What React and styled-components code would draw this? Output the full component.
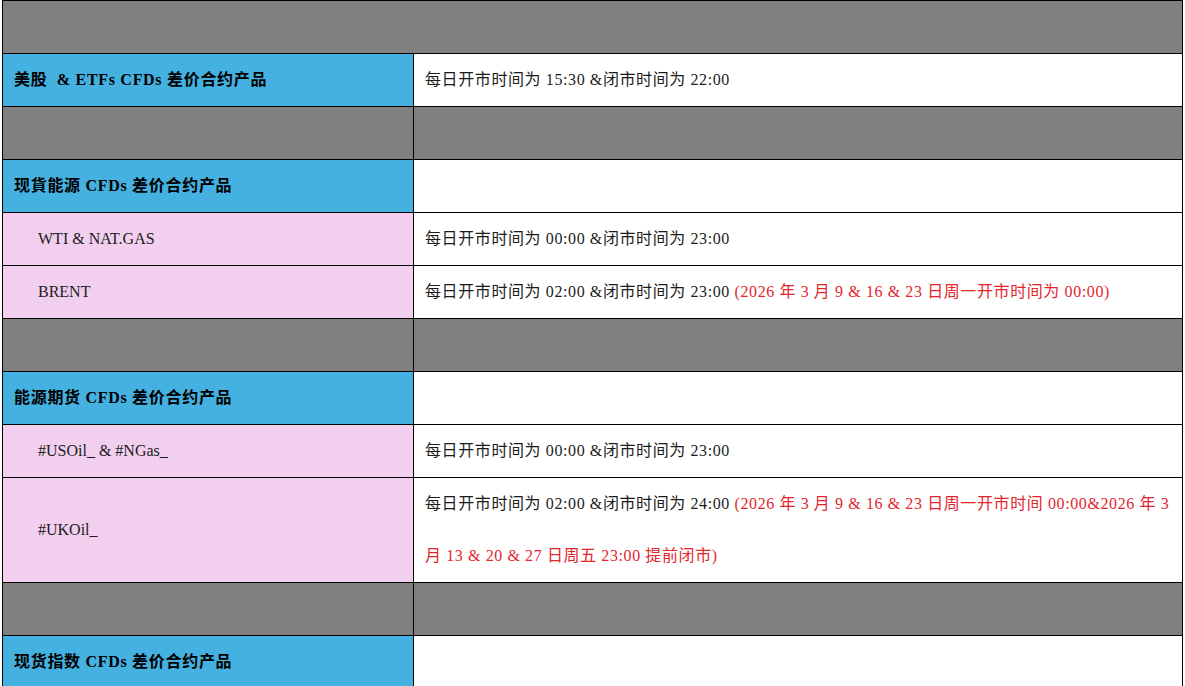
import React from "react"
import styled, { createGlobalStyle } from "styled-components"

const GlobalStyle = createGlobalStyle`
  html, body {
    margin: 0;
    padding: 0;
    background: #ffffff;
  }
  body {
    font-family: "Liberation Serif", "Noto Sans CJK SC", serif;
  }
`

const Page = styled.div`
  padding: 0 2px;
`

const Table = styled.table`
  width: 100%;
  border-collapse: collapse;
  table-layout: fixed;
  font-size: 16px;
  color: #1c1c1c;
`

const fills = {
  gray: "#808080",
  blue: "#45b1e0",
  pink: "#f2cfef",
  white: "#ffffff",
}

const Cell = styled.td`
  border: 1px solid #000;
  background: ${({ $fill }) => fills[$fill] || fills.white};
  line-height: 52px;
  height: 52px;
  padding: 0 0 0 ${({ $indent }) => ($indent ? "35px" : "11px")};
  vertical-align: middle;
  white-space: normal;
  word-break: break-all;
`

const Heading = styled.span`
  font-weight: 700;
  color: #000;
  letter-spacing: 0.7px;
`

const Hours = styled.span`
  letter-spacing: 0.6px;
`

const Note = styled.span`
  color: #e3262d;
  letter-spacing: 0.6px;
`

const GrayRow = ({ full }) =>
  full ? (
    <tr>
      <Cell $fill="gray" colSpan={2} />
    </tr>
  ) : (
    <tr>
      <Cell $fill="gray" />
      <Cell $fill="gray" />
    </tr>
  )

const GroupRow = ({ title, children }) => (
  <tr>
    <Cell $fill="blue">
      <Heading>{title}</Heading>
    </Cell>
    <Cell>{children}</Cell>
  </tr>
)

const ItemRow = ({ name, children }) => (
  <tr>
    <Cell $fill="pink" $indent>
      {name}
    </Cell>
    <Cell>{children}</Cell>
  </tr>
)

export default function App() {
  return (
    <Page>
      <GlobalStyle />
      <Table>
        <colgroup>
          <col style={{ width: "411px" }} />
          <col />
        </colgroup>
        <tbody>
          <GrayRow full />
          <GroupRow title={"美股\u00a0 & ETFs CFDs 差价合约产品"}>
            <Hours>每日开市时间为 15:30 &amp;闭市时间为 22:00</Hours>
          </GroupRow>
          <GrayRow />
          <GroupRow title="现貨能源 CFDs 差价合约产品" />
          <ItemRow name="WTI & NAT.GAS">
            <Hours>每日开市时间为 00:00 &amp;闭市时间为 23:00</Hours>
          </ItemRow>
          <ItemRow name="BRENT">
            <Hours>每日开市时间为 02:00 &amp;闭市时间为 23:00 </Hours>
            <Note>(2026 年 3 月 9 &amp; 16 &amp; 23 日周一开市时间为 00:00)</Note>
          </ItemRow>
          <GrayRow />
          <GroupRow title="能源期货 CFDs 差价合约产品" />
          <ItemRow name="#USOil_ & #NGas_">
            <Hours>每日开市时间为 00:00 &amp;闭市时间为 23:00</Hours>
          </ItemRow>
          <ItemRow name="#UKOil_">
            <Hours>每日开市时间为 02:00 &amp;闭市时间为 24:00 </Hours>
            <Note>
              (2026 年 3 月 9 &amp; 16 &amp; 23 日周一开市时间 00:00&amp;2026 年 3 月 13
              &amp; 20 &amp; 27 日周五 23:00 提前闭市)
            </Note>
          </ItemRow>
          <GrayRow />
          <GroupRow title="现货指数 CFDs 差价合约产品" />
        </tbody>
      </Table>
    </Page>
  )
}
